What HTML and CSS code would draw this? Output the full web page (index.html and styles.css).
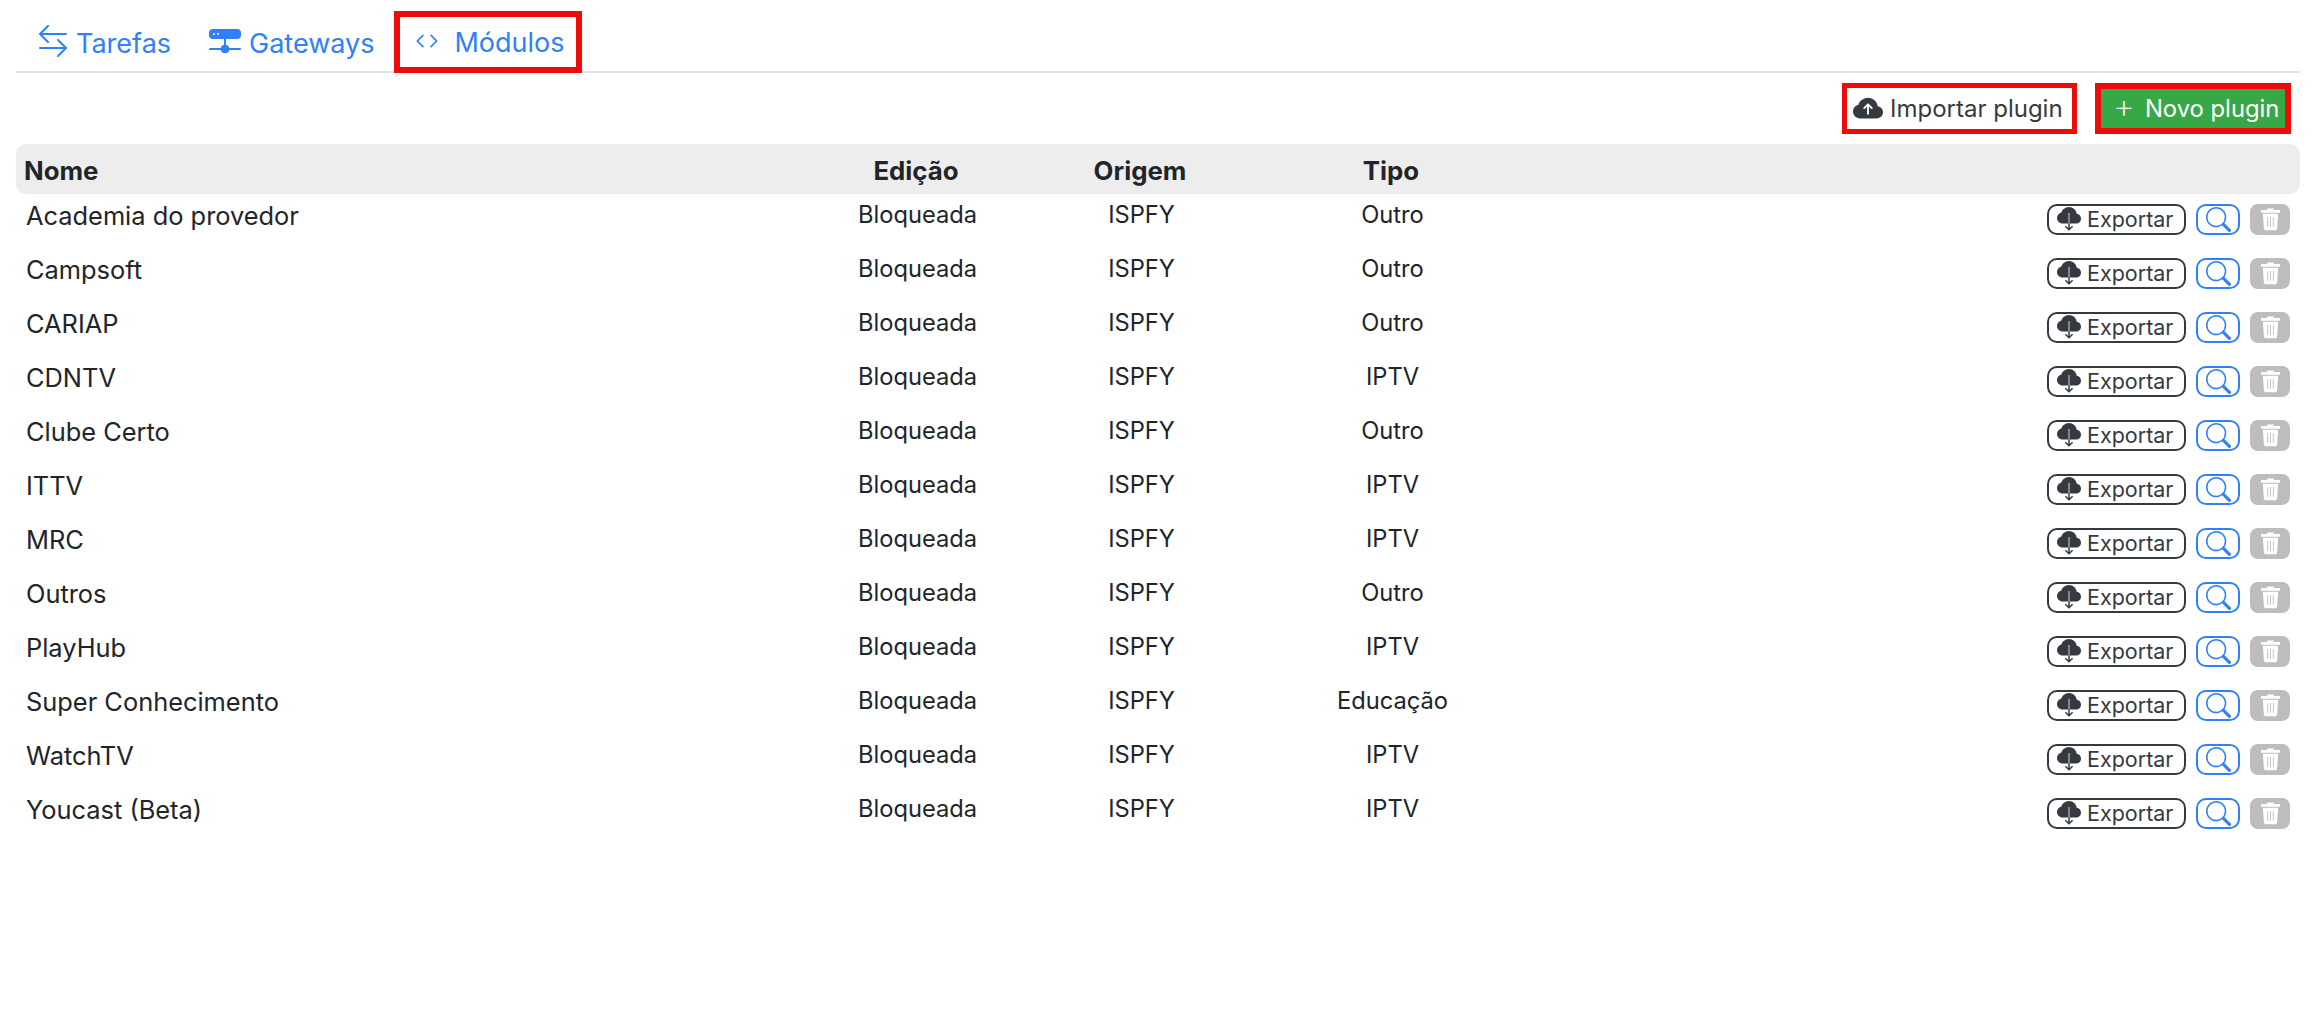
FILE: index.html
```html
<!DOCTYPE html>
<html lang="pt">
<head>
<meta charset="utf-8">
<title>Módulos</title>
<link rel="stylesheet" href="styles.css">
</head>
<body>
<svg class="defs" width="0" height="0" aria-hidden="true">
  <symbol id="i-swap" viewBox="0 0 16 16"><path d="M1 11.5a.5.5 0 0 0 .5.5h11.793l-3.147 3.146a.5.5 0 0 0 .708.708l4-4a.5.5 0 0 0 0-.708l-4-4a.5.5 0 0 0-.708.708L13.293 11H1.5a.5.5 0 0 0-.5.5zm14-7a.5.5 0 0 1-.5.5H2.707l3.147 3.146a.5.5 0 1 1-.708.708l-4-4a.5.5 0 0 1 0-.708l4-4a.5.5 0 1 1 .708.708L2.707 4H14.5a.5.5 0 0 1 .5.5z"/></symbol>
  <symbol id="i-net" viewBox="0 0 16 16"><path d="M2 2a2 2 0 0 0-2 2v1a2 2 0 0 0 2 2h5.5v3A1.5 1.5 0 0 0 6 11.5H.5a.5.5 0 0 0 0 1H6A1.5 1.5 0 0 0 7.5 14h1a1.5 1.5 0 0 0 1.5-1.5h5.5a.5.5 0 0 0 0-1H10A1.5 1.5 0 0 0 8.5 10V7H14a2 2 0 0 0 2-2V4a2 2 0 0 0-2-2H2zm.5 3a.5.5 0 1 1 0-1 .5.5 0 0 1 0 1zm2 0a.5.5 0 1 1 0-1 .5.5 0 0 1 0 1z"/></symbol>
  <symbol id="i-code" viewBox="0 0 16 16"><path d="M5.854 4.854a.5.5 0 1 0-.708-.708l-3.5 3.5a.5.5 0 0 0 0 .708l3.5 3.5a.5.5 0 0 0 .708-.708L2.707 8l3.147-3.146zm4.292 0a.5.5 0 0 1 .708-.708l3.5 3.5a.5.5 0 0 1 0 .708l-3.5 3.5a.5.5 0 0 1-.708-.708L13.293 8l-3.147-3.146z"/></symbol>
  <symbol id="i-up" viewBox="0 0 16 16"><path d="M8 2a5.53 5.53 0 0 0-3.594 1.342c-.766.66-1.321 1.52-1.464 2.383C1.266 6.095 0 7.555 0 9.318 0 11.366 1.708 13 3.781 13h8.906C14.502 13 16 11.57 16 9.773c0-1.636-1.242-2.969-2.834-3.194C12.923 3.999 10.69 2 8 2zm2.354 5.146a.5.5 0 0 1-.708.708L8.5 6.707V10.5a.5.5 0 0 1-1 0V6.707L6.354 7.854a.5.5 0 1 1-.708-.708l2-2a.5.5 0 0 1 .708 0l2 2z"/></symbol>
  <symbol id="i-down" viewBox="0 0 16 16"><path d="M8 0a5.53 5.53 0 0 0-3.594 1.342c-.766.66-1.321 1.52-1.464 2.383C1.266 4.095 0 5.555 0 7.318 0 9.366 1.708 11 3.781 11h8.906C14.502 11 16 9.57 16 7.773c0-1.636-1.242-2.969-2.834-3.194C12.923 1.999 10.69 0 8 0z"/><path class="arrow-in" d="M8 4v7" /><path class="arrow-out" d="M8 11v4M5.6 12.8 8 15.2l2.4-2.4"/></symbol>
  <symbol id="i-search" viewBox="0 0 16 16"><path d="M11.742 10.344a6.5 6.5 0 1 0-1.397 1.398h-.001c.03.04.062.078.098.115l3.85 3.85a1 1 0 0 0 1.415-1.414l-3.85-3.85a1.007 1.007 0 0 0-.115-.1zM12 6.5a5.5 5.5 0 1 1-11 0 5.5 5.5 0 0 1 11 0z"/></symbol>
  <symbol id="i-trash" viewBox="0 0 22 24"><path d="M1 2.6h20v2.8H1zM7.5 1h7v2h-7zM3 6.4h16l-1.1 15.9a1.6 1.6 0 0 1-1.6 1.5H5.7a1.6 1.6 0 0 1-1.6-1.5z"/><path class="trash-lines" d="M8 10v10M11 10v10M14 10v10"/></symbol>
</svg>

<nav class="tabs">
  <a class="tab"><svg class="tab-icon icon-swap"><use href="#i-swap"/></svg>Tarefas</a>
  <a class="tab"><svg class="tab-icon icon-net"><use href="#i-net"/></svg>Gateways</a>
  <a class="tab tab-marked"><svg class="tab-icon icon-code"><use href="#i-code"/></svg>Módulos</a>
</nav>

<div class="toolbar">
  <button class="btn-import"><svg class="cloud-big"><use href="#i-up"/></svg>Importar plugin</button>
  <button class="btn-new"><span class="plus">+</span>Novo plugin</button>
</div>

<div class="table">
  <div class="row head"><div class="name">Nome</div><div class="cell">Edição</div><div class="cell">Origem</div><div class="cell">Tipo</div><div></div></div>

  <div class="row"><div class="name">Academia do provedor</div><div class="cell">Bloqueada</div><div class="cell">ISPFY</div><div class="cell">Outro</div><div class="actions"><button class="btn-export"><svg class="cloud"><use href="#i-down"/></svg>Exportar</button><button class="btn-search"><svg class="search"><use href="#i-search"/></svg></button><button class="btn-trash"><svg class="trash"><use href="#i-trash"/></svg></button></div></div>
  <div class="row"><div class="name">Campsoft</div><div class="cell">Bloqueada</div><div class="cell">ISPFY</div><div class="cell">Outro</div><div class="actions"><button class="btn-export"><svg class="cloud"><use href="#i-down"/></svg>Exportar</button><button class="btn-search"><svg class="search"><use href="#i-search"/></svg></button><button class="btn-trash"><svg class="trash"><use href="#i-trash"/></svg></button></div></div>
  <div class="row"><div class="name">CARIAP</div><div class="cell">Bloqueada</div><div class="cell">ISPFY</div><div class="cell">Outro</div><div class="actions"><button class="btn-export"><svg class="cloud"><use href="#i-down"/></svg>Exportar</button><button class="btn-search"><svg class="search"><use href="#i-search"/></svg></button><button class="btn-trash"><svg class="trash"><use href="#i-trash"/></svg></button></div></div>
  <div class="row"><div class="name">CDNTV</div><div class="cell">Bloqueada</div><div class="cell">ISPFY</div><div class="cell">IPTV</div><div class="actions"><button class="btn-export"><svg class="cloud"><use href="#i-down"/></svg>Exportar</button><button class="btn-search"><svg class="search"><use href="#i-search"/></svg></button><button class="btn-trash"><svg class="trash"><use href="#i-trash"/></svg></button></div></div>
  <div class="row"><div class="name">Clube Certo</div><div class="cell">Bloqueada</div><div class="cell">ISPFY</div><div class="cell">Outro</div><div class="actions"><button class="btn-export"><svg class="cloud"><use href="#i-down"/></svg>Exportar</button><button class="btn-search"><svg class="search"><use href="#i-search"/></svg></button><button class="btn-trash"><svg class="trash"><use href="#i-trash"/></svg></button></div></div>
  <div class="row"><div class="name">ITTV</div><div class="cell">Bloqueada</div><div class="cell">ISPFY</div><div class="cell">IPTV</div><div class="actions"><button class="btn-export"><svg class="cloud"><use href="#i-down"/></svg>Exportar</button><button class="btn-search"><svg class="search"><use href="#i-search"/></svg></button><button class="btn-trash"><svg class="trash"><use href="#i-trash"/></svg></button></div></div>
  <div class="row"><div class="name">MRC</div><div class="cell">Bloqueada</div><div class="cell">ISPFY</div><div class="cell">IPTV</div><div class="actions"><button class="btn-export"><svg class="cloud"><use href="#i-down"/></svg>Exportar</button><button class="btn-search"><svg class="search"><use href="#i-search"/></svg></button><button class="btn-trash"><svg class="trash"><use href="#i-trash"/></svg></button></div></div>
  <div class="row"><div class="name">Outros</div><div class="cell">Bloqueada</div><div class="cell">ISPFY</div><div class="cell">Outro</div><div class="actions"><button class="btn-export"><svg class="cloud"><use href="#i-down"/></svg>Exportar</button><button class="btn-search"><svg class="search"><use href="#i-search"/></svg></button><button class="btn-trash"><svg class="trash"><use href="#i-trash"/></svg></button></div></div>
  <div class="row"><div class="name">PlayHub</div><div class="cell">Bloqueada</div><div class="cell">ISPFY</div><div class="cell">IPTV</div><div class="actions"><button class="btn-export"><svg class="cloud"><use href="#i-down"/></svg>Exportar</button><button class="btn-search"><svg class="search"><use href="#i-search"/></svg></button><button class="btn-trash"><svg class="trash"><use href="#i-trash"/></svg></button></div></div>
  <div class="row"><div class="name">Super Conhecimento</div><div class="cell">Bloqueada</div><div class="cell">ISPFY</div><div class="cell">Educação</div><div class="actions"><button class="btn-export"><svg class="cloud"><use href="#i-down"/></svg>Exportar</button><button class="btn-search"><svg class="search"><use href="#i-search"/></svg></button><button class="btn-trash"><svg class="trash"><use href="#i-trash"/></svg></button></div></div>
  <div class="row"><div class="name">WatchTV</div><div class="cell">Bloqueada</div><div class="cell">ISPFY</div><div class="cell">IPTV</div><div class="actions"><button class="btn-export"><svg class="cloud"><use href="#i-down"/></svg>Exportar</button><button class="btn-search"><svg class="search"><use href="#i-search"/></svg></button><button class="btn-trash"><svg class="trash"><use href="#i-trash"/></svg></button></div></div>
  <div class="row"><div class="name">Youcast (Beta)</div><div class="cell">Bloqueada</div><div class="cell">ISPFY</div><div class="cell">IPTV</div><div class="actions"><button class="btn-export"><svg class="cloud"><use href="#i-down"/></svg>Exportar</button><button class="btn-search"><svg class="search"><use href="#i-search"/></svg></button><button class="btn-trash"><svg class="trash"><use href="#i-trash"/></svg></button></div></div>
</div>
</body>
</html>
```

FILE: styles.css
```css
* { box-sizing: border-box; }
html, body { height: 100%; }
body {
  margin: 0;
  padding: 11px 12px 0 16px;
  background: #fff;
  color: #212529;
  font-family: Inter, "Noto Sans", sans-serif;
  overflow: hidden;
}
.defs { position: absolute; }
button { font-family: inherit; padding: 0; cursor: pointer; }

.tabs {
  display: flex;
  height: 62px;
  border-bottom: 2px solid #dee2e6;
  align-items: stretch;
}
.tab {
  display: flex;
  align-items: center;
  color: #2f80fa;
  font-size: 27px;
  padding: 4px 17px 0 21px;
}
.tab:nth-child(2) { padding: 4px 20px 0 21px; }
.tab-icon { fill: currentColor; flex: none; }
.icon-swap { width: 32px; height: 32px; margin-right: 7px; margin-top: -4px; }
.icon-net { width: 32px; height: 32px; margin-right: 8px; margin-top: -4px; }
.icon-code { width: 26px; height: 26px; margin-right: 14px; margin-left: 2px; margin-top: -2px; }
.tab-marked {
  flex: none;
  width: 188px;
  height: 62px;
  padding: 0 0 0 12px;
  border: 6px solid #f00b0b;
}

.toolbar {
  display: flex;
  justify-content: flex-end;
  align-items: center;
  gap: 18px;
  height: 71px;
  padding: 0 9px 0 0;
}
.btn-import {
  display: flex;
  align-items: center;
  width: 235px;
  height: 51px;
  padding-left: 6px;
  background: #fff;
  color: #343a40;
  border: 5px solid #f00b0b;
  font-size: 24px;
}
.cloud-big { width: 30px; height: 30px; margin-right: 7px; fill: #343a40; }
.btn-new {
  display: flex;
  align-items: center;
  width: 196px;
  height: 51px;
  padding-left: 12px;
  background: #37a846;
  color: #fff;
  border: 6px solid #f00b0b;
  font-size: 23.8px;
}
.plus { font-size: 34px; margin: -5px 10px 0 0; font-weight: 200; line-height: 1; }

.table { display: block; }
.row {
  display: grid;
  grid-template-columns: 790px 220px 228px 274px 1fr;
  height: 54px;
  padding-bottom: 11px;
  align-items: center;
  font-size: 23.7px;
}
.row > .name { padding-left: 10px; font-size: 25.4px; }
.cell { text-align: center; margin-top: -2px; padding-left: 3px; }
.head {
  height: 50px;
  padding: 2px 0 0;
  background: #ededed;
  border-radius: 10px;
  font-weight: 700;
  font-size: 25.8px;
}
.row.head > .name { padding-left: 8px; font-size: 25.8px; }
.head .cell { margin-top: 0; padding-left: 0; }
.actions {
  display: flex;
  justify-content: flex-end;
  align-items: center;
  gap: 10px;
  padding: 7px 10px 0 0;
}
.btn-export {
  display: flex;
  align-items: center;
  width: 139px;
  height: 31px;
  padding-left: 8px;
  background: #fff;
  color: #343a40;
  border: 2px solid #343a40;
  border-radius: 10px;
  font-size: 21.5px;
}
.cloud { width: 24px; height: 24px; margin-right: 6px; fill: #343a40; }
.arrow-in { stroke: #9ea2a6; stroke-width: 1; fill: none; }
.arrow-out { stroke: #343a40; stroke-width: 1; fill: none; }
.btn-search {
  display: flex;
  align-items: center;
  justify-content: center;
  width: 44px;
  height: 31px;
  background: #fff;
  border: 2px solid #2f80fa;
  border-radius: 10px;
}
.search { width: 25px; height: 25px; fill: #2f80fa; }
.btn-trash {
  display: flex;
  align-items: center;
  justify-content: center;
  width: 40px;
  height: 31px;
  background: #bdbdbd;
  border: 0;
  border-radius: 8px;
}
.trash { width: 21px; height: 24px; fill: #fff; }
.trash-lines { stroke: #c4c4c4; stroke-width: 1; fill: none; }
```
